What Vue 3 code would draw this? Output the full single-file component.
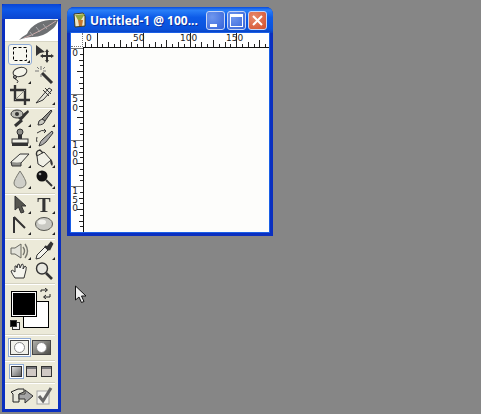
<template>
  <div class="desktop">
    <aside class="toolbox">
      <div class="toolbox-title"></div>
      <div class="logo">
        <svg width="53" height="22" viewBox="0 0 53 22">
          <path d="M14 21 Q18 17 22 15 Q25 8 33 4 Q42 0 53 1 Q51 8 46 11 Q38 18 28 18 Q20 18 14 21Z" fill="#6e7073" />
          <path d="M19 19 Q33 14 51 2" stroke="#c9a9a9" stroke-width="1" fill="none" />
          <path d="M31 8 L35 13 M38 5 L42 10 M25 13 L28 17" stroke="#a9a9ab" stroke-width="1" />
        </svg>
      </div>

      <div v-for="(group, g) in toolGroups" :key="g" class="tool-grid" :class="group.cls">
        <div v-for="tool in group.tools" :key="tool.name" class="tool" :class="{ active: tool.active }" :title="tool.name">
          <svg width="20" height="20" viewBox="0 0 20 20" v-html="tool.icon"></svg>
          <span v-if="tool.more" class="more"></span>
        </div>
      </div>

      <div class="swatches">
        <div class="swatch-bg"></div>
        <div class="swatch-fg"></div>
        <svg class="swap" width="11" height="11" viewBox="0 0 11 11">
          <path d="M1 4 L1 2 L7 2 M5 0 L7.5 2 L5 4 M10 6 L10 9 L4 9 M6 7 L3.5 9 L6 11" stroke="#222" fill="none" />
        </svg>
        <div class="mini"><span class="mini-bg"></span><span class="mini-fg"></span></div>
      </div>

      <hr class="sep" />
      <div class="mode-row">
        <div class="mode-btn active"><span class="ring"></span></div>
        <div class="mode-btn dark"><span class="ring"></span></div>
      </div>

      <hr class="sep" />
      <div class="screen-row">
        <div class="screen-btn active"><span class="screen first"></span></div>
        <div class="screen-btn"><span class="screen"></span></div>
        <div class="screen-btn"><span class="screen"></span></div>
      </div>

      <hr class="sep" />
      <div class="jump-row">
        <svg width="24" height="20" viewBox="0 0 24 20">
          <path d="M1 6 L8 3 L14 3 L14 6 L9 8 L9 16 L3 16 L3 8Z" fill="#e8e8dc" stroke="#222" />
          <path d="M9 8 L15 8 L15 4 L23 10 L15 17 L15 13 L9 13Z" fill="#a5a5a5" stroke="#333" />
        </svg>
        <svg width="18" height="19" viewBox="0 0 18 19">
          <rect x="1" y="5" width="12" height="13" fill="#f4f4ee" stroke="#a5a5a5" />
          <path d="M3 10 L7 15 L15 2" stroke="#666" stroke-width="3" fill="none" />
        </svg>
      </div>
    </aside>

    <section class="doc">
      <header class="doc-title">
        <svg class="doc-icon" width="16" height="16" viewBox="0 0 16 16">
          <path d="M2 2 L11 1 L13 4 L13 14 L3 15Z" fill="#efe8c8" stroke="#3c3a20" />
          <path d="M3 3 L13 2 L9 8 L6 8Z" fill="#93a83c" />
          <path d="M6 8 L11 8 L10 14 L7 14Z" fill="#c4762e" />
        </svg>
        <span class="doc-name">Untitled-1 @ 100...</span>
        <div class="win-btns">
          <button class="win-btn"><span class="min"></span></button>
          <button class="win-btn"><span class="max"></span></button>
          <button class="win-btn close">
            <svg width="11" height="11" viewBox="0 0 11 11"><path d="M1 1 L10 10 M10 1 L1 10" stroke="#fff" stroke-width="2" /></svg>
          </button>
        </div>
      </header>

      <div class="doc-body">
        <div class="ruler-top">
          <div class="corner"></div>
          <svg class="h-ruler" width="186" height="15" viewBox="0 0 186 15">
            <line v-for="t in hTicks" :key="t.x" :x1="t.x" :x2="t.x" :y1="t.y" y2="14" stroke="#222" />
            <text v-for="n in hLabels" :key="n.label" :x="n.x" y="8" class="ruler-num">{{ n.label }}</text>
            <line x1="0" x2="186" y1="14.5" y2="14.5" stroke="#111" />
          </svg>
        </div>
        <div class="doc-main">
          <svg class="v-ruler" width="13" height="185" viewBox="0 0 13 185">
            <line v-for="t in vTicks" :key="t.y" :x1="t.x" x2="12" :y1="t.y" :y2="t.y" :stroke="t.x ? '#222' : '#777'" />
            <text v-for="n in vLabels" :key="n.y" x="4" :y="n.y" class="ruler-num upright">{{ n.label }}</text>
            <line x1="12.5" x2="12.5" y1="0" y2="185" stroke="#111" />
          </svg>
          <div class="canvas"></div>
        </div>
      </div>
    </section>

    <svg class="cursor" width="13" height="19" viewBox="0 0 13 19">
      <path d="M1.5 1 L1.5 15 L5 12 L7.5 17.5 L10 16.5 L7.5 11 L12 11Z" fill="#eee" stroke="#111" />
    </svg>
  </div>
</template>

<script setup>
const ink = "#333";
const mid = "#8d8d88";

const icon = {
  marquee: `<rect x="3.5" y="3.5" width="13" height="13" fill="none" stroke="#000" stroke-dasharray="3 2" />`,
  move: `<path d="M2 1 L2 12 L6 9 L11 8Z" fill="${ink}"/><path d="M13 7 V17 M8 12 H18" stroke="${ink}" stroke-width="2"/><path d="M13 5 L15 8 H11Z M13 19 L15 16 H11Z M6 12 L9 10 V14Z M20 12 L17 10 V14Z" fill="${ink}"/>`,
  lasso: `<ellipse cx="10" cy="7" rx="7" ry="4.5" fill="#f4f4ea" stroke="${ink}" transform="rotate(-15 10 7)"/><path d="M5 10 Q3 14 7 15 Q9 16 7 18" fill="none" stroke="${ink}"/><circle cx="5" cy="12" r="1.6" fill="${mid}" stroke="${ink}"/>`,
  wand: `<path d="M8 8 L18 18" stroke="${ink}" stroke-width="3"/><path d="M7 1 V5 M7 9 V12 M1 6 H5 M9 6 H12 M3 2 L5 4 M11 2 L9 4" stroke="#777"/>`,
  crop: `<path d="M5 0 V15 H20 M0 5 H15 V20" fill="none" stroke="${ink}" stroke-width="2.4"/><path d="M5 15 L15 5" stroke="${mid}"/>`,
  slice: `<path d="M2 18 L15 3 L18 5 L9 15Z" fill="#e6e6dc" stroke="${ink}"/><path d="M9 5 L15 11 M11 3 L17 9" stroke="${ink}"/>`,
  heal: `<path d="M8 10 L18 2 L19 4 L11 13Z" fill="${ink}"/><ellipse cx="7" cy="6" rx="6" ry="4" fill="#bdbdb5" stroke="${ink}"/><circle cx="7" cy="6" r="2" fill="${ink}"/><path d="M5 18 L12 12" stroke="${ink}" stroke-width="3"/>`,
  brush: `<path d="M8 11 L17 2 L18 3 L11 13Z" fill="${mid}" stroke="${ink}"/><path d="M4 17 Q4 12 8 11 L11 13 Q10 17 4 17Z" fill="#c9c9c0" stroke="${ink}"/>`,
  stamp: `<ellipse cx="10" cy="4" rx="3" ry="3" fill="${mid}" stroke="${ink}"/><path d="M8 7 H12 V11 H8Z" fill="${ink}"/><rect x="2" y="11" width="16" height="4" fill="#f0f0e6" stroke="${ink}"/><rect x="2" y="15" width="16" height="3" fill="${ink}"/>`,
  history: `<path d="M5 18 Q6 13 9 11 L18 3 L19 5 L12 14 Q9 17 5 18Z" fill="#aaa" stroke="${ink}"/><path d="M3 5 Q8 1 12 3 M12 3 L10 1 M12 3 L10 5 M3 9 Q2 12 3 14" stroke="${ink}" fill="none"/>`,
  eraser: `<path d="M1 13 L10 5 L19 5 L11 14 L2 15Z" fill="#efefe6" stroke="${ink}"/><path d="M1 13 L2 17 L11 17 L11 14" fill="#8f8f8a" stroke="${ink}"/>`,
  bucket: `<path d="M3 7 L10 3 L17 11 L9 18 L4 15Z" fill="#f0f0e6" stroke="${ink}"/><path d="M3 7 Q1 2 6 1 L9 4" fill="none" stroke="${ink}" stroke-width="1.4"/><path d="M17 10 Q20 14 18 17 Q15 14 17 10Z" fill="${ink}"/>`,
  drop: `<path d="M10 2 Q16 11 16 14 A6 5 0 0 1 4 14 Q4 11 10 2Z" fill="#cfcfc8" stroke="#77776f"/>`,
  dodge: `<circle cx="8" cy="7" r="5.5" fill="#111"/><circle cx="6" cy="5" r="1.3" fill="#999"/><path d="M12 11 L18 17" stroke="${ink}" stroke-width="2"/>`,
  select: `<path d="M5 1 L5 15 L8.5 12 L11 18 L14 17 L11.5 11 L16 11Z" fill="#55554f" stroke="${ink}"/>`,
  pen: `<path d="M4 2 L4 18 M4 2 L15 13" stroke="${ink}" stroke-width="2" fill="none"/>`,
  ellipse: `<ellipse cx="10" cy="9" rx="8.5" ry="6.5" fill="#c9c9c3" stroke="#55554f"/><ellipse cx="8" cy="7" rx="4" ry="2.5" fill="#f1f1ec"/>`,
  speaker: `<path d="M1 7 H5 L11 3 V17 L5 13 H1Z" fill="#e3e3da" stroke="#66665f"/><path d="M13 6 Q16 10 13 14 M15 3 Q20 10 15 17" fill="none" stroke="#77776f" stroke-width="1.4"/>`,
  dropper: `<path d="M2 18 L3 14 L11 6 L14 9 L6 17Z" fill="#f4f4ec" stroke="${ink}"/><path d="M11 5 L15 9 M13 7 L17 2 L18 3 L15 9" stroke="${ink}" stroke-width="2.4"/>`,
  hand: `<path d="M5 17 Q2 13 1 10 Q2 8 5 11 L5 5 Q7 4 7 7 L8 3 Q10 2 10 7 L12 3 Q14 3 13 8 L15 5 Q17 5 16 9 L14 17Z" fill="#f5f5ee" stroke="${ink}"/>`,
  zoom: `<circle cx="8" cy="7.5" r="5.5" fill="#e8e8e0" stroke="${ink}" stroke-width="1.4"/><path d="M12 12 L18 18" stroke="${ink}" stroke-width="2.6"/>`,
};

const t = (name, more = true, active = false) => ({ name, icon: icon[name], more, active });

// same row order as the palette, top to bottom
const toolGroups = [
  { cls: "group-a", tools: [t("marquee", true, true), t("move", false), t("lasso"), t("wand", false), t("crop", false), t("slice")] },
  { cls: "group-b", tools: [t("heal"), t("brush"), t("stamp"), t("history"), t("eraser"), t("bucket"), t("drop"), t("dodge")] },
  { cls: "group-c", tools: [t("select"), { name: "type", icon: `<text x="10" y="16.5" text-anchor="middle" font-family="Liberation Serif, serif" font-weight="700" font-size="20" fill="#333">T</text>`, more: true }, t("pen"), t("ellipse")] },
  { cls: "group-d", tools: [t("speaker"), t("dropper"), t("hand", false), t("zoom", false)] },
];

const hTicks = [];
for (let i = -2; i < 32; i++) {
  const x = Math.round(13.5 + i * 5.82) + 0.5;
  if (x < 0) continue;
  hTicks.push({ x, y: i % 8 === 0 ? 0 : i % 4 === 0 ? 7 : i % 2 === 0 ? 9 : 11 });
}
const hLabels = [
  { label: "0", x: 3 },
  { label: "50", x: 50 },
  { label: "100", x: 97 },
  { label: "150", x: 143 },
];

const vTicks = [];
for (let i = 0; i < 32; i++) {
  const y = Math.round(i * 5.75) + 0.5;
  vTicks.push({ y, x: i % 8 === 0 ? 0 : i % 4 === 0 ? 6 : i % 2 === 0 ? 8 : 9 });
}
const vLabels = [
  { label: "0", y: 0 },
  { label: "50", y: 46 },
  { label: "100", y: 92 },
  { label: "150", y: 138 },
];
</script>

<style>
html,
body {
  margin: 0;
  background: #868686;
}
</style>

<style scoped>
.desktop {
  position: relative;
  width: 481px;
  height: 414px;
  overflow: hidden;
  background: #868686;
}

.toolbox {
  position: absolute;
  left: 2px;
  top: 4px;
  width: 53px;
  height: 390px;
  padding-top: 15px;
  background: #ecead9;
  border-left: 3px solid #0a2fc0;
  border-right: 3px solid #0a2fc0;
  border-bottom: 3px solid #0a2fc0;
  display: flex;
  flex-direction: column;
  align-items: stretch;
}

.toolbox-title {
  position: absolute;
  left: -3px;
  right: -3px;
  top: 0;
  height: 15px;
  background: linear-gradient(#0a45d4, #0e58e8 35%, #0a45d0);
  border-radius: 3px 3px 0 0;
}

.logo {
  height: 22px;
  background: #fff;
  display: flex;
  align-items: flex-end;
  border-bottom: 1px solid #d8d6c4;
}

.tool-grid {
  display: grid;
  grid-template-columns: 24px 24px;
  grid-auto-rows: 20.5px;
  padding-left: 3px;
  border-bottom: 1px solid #d5d3c2;
  margin-right: 3px;
  box-shadow: 0 1px 0 #fff;
}

.group-a {
  padding-top: 2px;
  padding-bottom: 1px;
}

.group-b {
  padding-top: 0;
  padding-bottom: 3px;
}

.group-c {
  padding-top: 1px;
  padding-bottom: 2px;
}

.group-d {
  padding-top: 2px;
  padding-bottom: 1px;
}

.tool {
  position: relative;
  display: flex;
  align-items: center;
  justify-content: center;
  box-sizing: border-box;
}

.tool svg {
  filter: blur(0.3px);
}

.tool.active {
  border: 1px solid #8eaad6;
  border-radius: 3px;
  background: #f7f7ef;
}

.more {
  position: absolute;
  right: 1px;
  bottom: 1px;
  width: 0;
  height: 0;
  border-left: 3px solid transparent;
  border-bottom: 3px solid #222;
}

.swatches {
  position: relative;
  height: 50px;
}

.swatch-fg,
.swatch-bg {
  position: absolute;
  box-sizing: border-box;
  border: 1px solid #000;
}

.swatch-bg {
  left: 18px;
  top: 17px;
  width: 26px;
  height: 27px;
  background: #fff;
}

.swatch-fg {
  left: 6px;
  top: 7px;
  width: 26px;
  height: 26px;
  background: #000;
  box-shadow: inset 0 0 0 1px #fff;
  outline: 1px solid #000;
  outline-offset: -3px;
}

.swap {
  position: absolute;
  left: 35px;
  top: 4px;
}

.mini {
  position: absolute;
  left: 5px;
  top: 36px;
  width: 10px;
  height: 10px;
}

.mini-bg,
.mini-fg {
  position: absolute;
  width: 6px;
  height: 6px;
  border: 1px solid #333;
}

.mini-bg {
  left: 2px;
  top: 2px;
  background: #eee;
}

.mini-fg {
  left: 0;
  top: 0;
  width: 5px;
  height: 5px;
  background: #000;
}

.sep {
  margin: 0 3px 0 0;
  height: 1px;
  border: none;
  background: #d5d3c2;
  box-shadow: 0 1px 0 #fff;
}

.mode-row {
  display: flex;
  align-items: center;
  gap: 3px;
  height: 25px;
  padding-left: 5px;
}

.mode-btn {
  width: 17px;
  height: 13px;
  display: flex;
  align-items: center;
  justify-content: center;
  background: linear-gradient(#e4e4de, #b5b5ae);
  border: 1px solid #444;
}

.mode-btn.active {
  box-shadow: 0 0 0 1px #fff, 0 0 0 2px #8eaad6;
  background: #f0f0ea;
}

.mode-btn.dark {
  background: linear-gradient(135deg, #b0b0aa, #4c4c48);
}

.ring {
  width: 9px;
  height: 9px;
  border-radius: 50%;
  background: #fff;
  border: 1px solid #888;
}

.screen-row {
  display: flex;
  align-items: center;
  height: 21px;
  padding-left: 6px;
  gap: 4px;
}

.screen-btn {
  width: 11px;
  height: 11px;
  display: flex;
  align-items: center;
  justify-content: center;
}

.screen-btn.active {
  box-shadow: 0 0 0 1px #fff, 0 0 0 2px #8eaad6;
  background: #f5f5ee;
}

.screen {
  display: block;
  width: 9px;
  height: 9px;
  border: 1px solid #333;
  background: linear-gradient(#77777a 25%, #d0c9c4 25%);
}

.screen.first {
  background: linear-gradient(135deg, #ddd, #666);
}

.jump-row {
  display: flex;
  align-items: center;
  gap: 2px;
  padding: 3px 0 0 5px;
}

.doc {
  position: absolute;
  left: 67px;
  top: 7px;
  width: 206px;
  height: 229px;
  box-sizing: border-box;
  display: flex;
  flex-direction: column;
  background: #0a2fc0;
  border-radius: 7px 7px 0 0;
  padding-bottom: 4px;
}

.doc-title {
  flex: none;
  height: 26px;
  display: flex;
  align-items: center;
  padding: 0 6px 0 5px;
  background: linear-gradient(#0a4ddc, #2a80f8 12%, #0d5be8 40%, #0a52dc 85%, #0a3fbe);
  border-radius: 7px 7px 0 0;
}

.doc-icon {
  flex: none;
  margin-right: 2px;
}

.doc-name {
  flex: 1;
  color: #fff;
  font: 700 12px "Open Sans", "DejaVu Sans", sans-serif;
  white-space: nowrap;
  text-shadow: 1px 1px 0 #0a2f9c;
}

.win-btns {
  display: flex;
  gap: 2px;
}

.win-btn {
  width: 19px;
  height: 19px;
  padding: 0;
  display: flex;
  align-items: center;
  justify-content: center;
  position: relative;
  border: 1px solid #c8d6f5;
  border-radius: 3px;
  background: radial-gradient(circle at 30% 30%, #6f97ee, #3563d9);
}

.win-btn.close {
  background: radial-gradient(circle at 30% 30%, #e88a6c, #d24f2c);
}

.min {
  position: absolute;
  left: 3px;
  bottom: 2px;
  width: 7px;
  height: 3px;
  background: #fff;
}

.max {
  width: 11px;
  height: 9px;
  border: 1px solid #fff;
  border-top-width: 3px;
}

.doc-body {
  flex: 1;
  min-height: 0;
  margin: 0 4px;
  display: flex;
  flex-direction: column;
  background: #fdfdfb;
  box-shadow: 0 0 0 1px #1a5fe6;
}

.ruler-top {
  flex: none;
  display: flex;
  height: 15px;
  background: #fff;
}

.corner {
  width: 12px;
  height: 14px;
  box-sizing: border-box;
  border-right: 1px dotted #777;
  border-bottom: 1px dotted #777;
}

.h-ruler,
.v-ruler {
  display: block;
  flex: none;
}

.ruler-num {
  font: 9px "DejaVu Sans", sans-serif;
  fill: #222;
}

.upright {
  writing-mode: vertical-rl;
  text-orientation: upright;
  letter-spacing: -1.5px;
}

.doc-main {
  flex: 1;
  min-height: 0;
  display: flex;
  overflow: hidden;
}

.v-ruler {
  background: #fff;
}

.canvas {
  flex: 1;
  background: #fdfdfb;
}

.cursor {
  position: absolute;
  left: 74px;
  top: 285px;
}
</style>
